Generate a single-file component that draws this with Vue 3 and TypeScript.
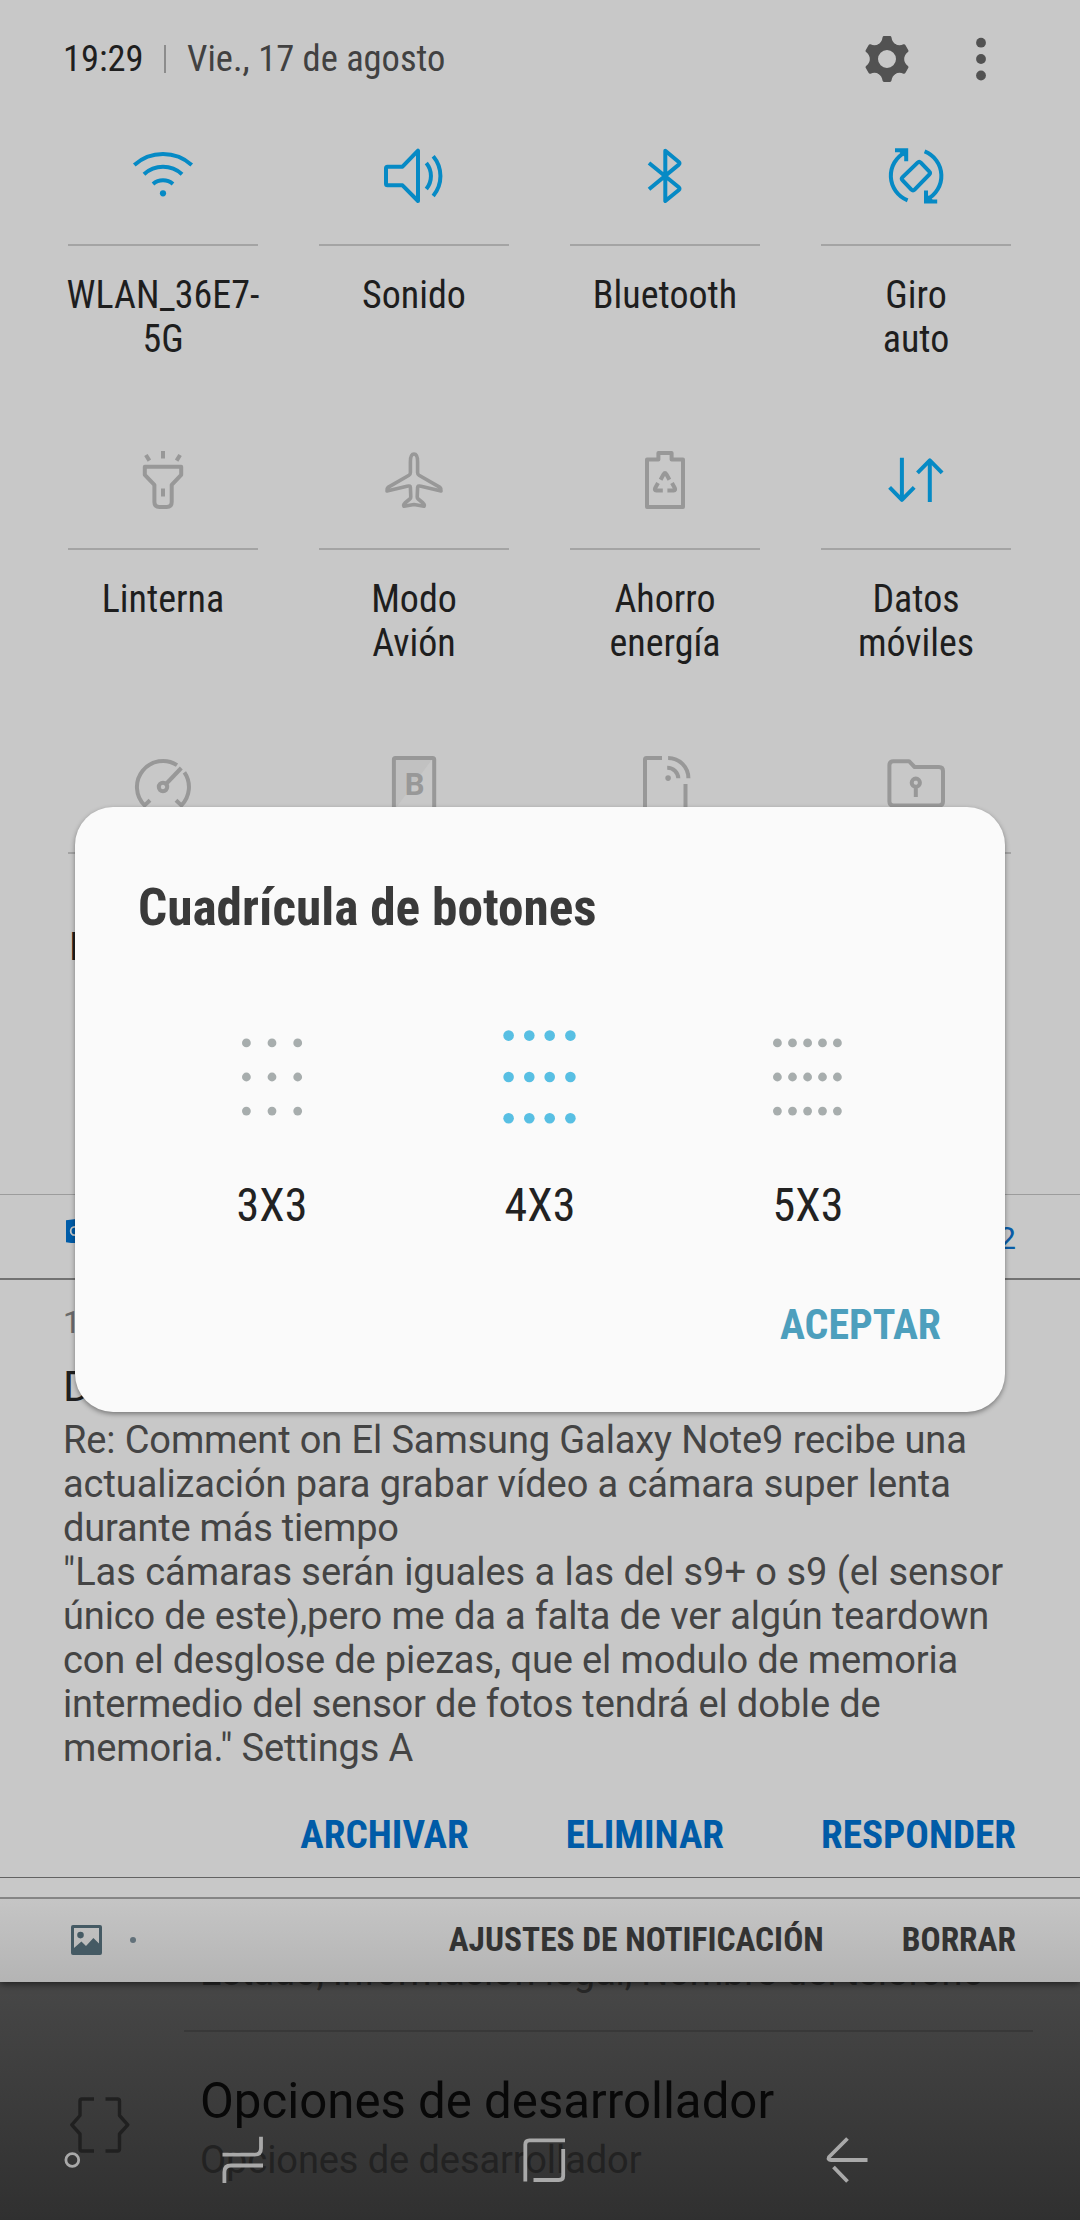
<script setup lang="ts">
interface Icon {
  strokes: string[]
  width?: number
  fills?: string[]
  tint?: string
  letter?: string
}
interface Tile {
  label: string[]
  on: boolean
  icon: Icon
}

const tiles: Tile[] = [
  {
    label: ['WLAN_36E7-', '5G'],
    on: true,
    icon: {
      strokes: [
        'M7.3 24.9A43 43 0 0 1 64.7 24.9',
        'M17 34.2A28 28 0 0 1 55 34.2',
        'M26 44A15.4 15.4 0 0 1 46 44',
      ],
      fills: ['M36 50.2a3.1 3.1 0 1 1 0 6.2a3.1 3.1 0 0 1 0-6.2z'],
    },
  },
  {
    label: ['Sonido'],
    on: true,
    icon: {
      strokes: [
        'M8 28.2Q8 26.7 9.5 26.7H24.5L40 10.7V61L24.5 45.3H9.5Q8 45.3 8 43.8Z',
        'M48.3 23.1A20.5 20.5 0 0 1 48.3 49.1',
        'M55.2 16.2A31 31 0 0 1 55.2 56',
      ],
    },
  },
  {
    label: ['Bluetooth'],
    on: true,
    icon: {
      strokes: ['M20 23L49.8 47.3Q51.2 48.8 49.8 50L36.3 61V10.7L49.8 22Q51.2 23.3 49.8 24.6L20 49.2'],
    },
  },
  {
    label: ['Giro', 'auto'],
    on: true,
    icon: {
      strokes: [
        'M27.6 60.3A26.3 26.3 0 0 1 25.5 12.2',
        'M44.6 11.4A26.3 26.3 0 0 1 46.7 59.5',
        'M37.6 22.6Q39.2 21 40.8 22.6L49.2 31.4Q50.8 33 49.2 34.7L34.6 49.6Q33 51.2 31.4 49.6L22.6 40.4Q21 38.8 22.6 37.2Z',
      ],
      fills: ['M15 8.2H28.2V21.3H24.2V16.6L19.6 12.2H15Z', 'M57.2 63.6H44V50.5H48V55.2L52.6 59.6H57.2Z'],
    },
  },
  {
    label: ['Linterna'],
    on: false,
    icon: {
      strokes: [
        'M17.8 22.7H54.2V30.8L44.7 40.8V58Q44.7 63 39.7 63H32.4Q27.4 63 27.4 58V40.8L17.8 30.8Z',
        'M36 7V14.4M18.9 11L22.4 16.6M53.1 11L49.6 16.6M36 44.4V52.4',
      ],
    },
  },
  {
    label: ['Modo', 'Avión'],
    on: false,
    icon: {
      strokes: [
        'M36 10C33.4 10 32.4 14 32.4 18V28.6Q32.4 30.4 31 31.2L10 43.4Q8.6 44.6 9 47L30 42.1Q32.3 41.5 32.4 43.5L32.8 53Q32.8 54.2 31.8 55L27 59Q25 61 26 62.3L36 60.6L46 62.3Q47 61 45 59L40.2 55Q39.2 54.2 39.2 53L39.6 43.5Q39.7 41.5 42 42.1L63 47Q63.4 44.6 62 43.4L41 31.2Q39.6 30.4 39.6 28.6V18C39.6 14 38.6 10 36 10Z',
      ],
      width: 3.6,
    },
  },
  {
    label: ['Ahorro', 'energía'],
    on: false,
    icon: {
      strokes: [
        'M18 15.5H29.4V9H42.6V15.5H54V63H18Z',
        'M31.6 35.8L34.6 30.2Q36 28 37.4 30.2L40.4 35.8M29 39L26.2 44Q25.2 46.4 27.4 46.6H33.8M43 39L45.8 44Q46.8 46.4 44.6 46.6H38.4',
      ],
    },
  },
  {
    label: ['Datos', 'móviles'],
    on: true,
    icon: {
      strokes: [
        'M21.9 13.7V55.5M9.6 43.4L21.9 55.8L34.2 43.4',
        'M49.8 58V16.2M37.5 28.8L49.8 16.4L62.1 28.8',
      ],
    },
  },
  {
    label: ['\u00a0', 'Rendimiento'],
    on: false,
    icon: {
      strokes: [
        'M50 17.1A26 26 0 0 0 17.6 57.4L23 52.3M49 52.3L54.4 57.4A26 26 0 0 0 57.4 24.4',
        'M39 36L54.3 20',
        'M36 34.8a4.2 4.2 0 1 1 0 8.4a4.2 4.2 0 0 1 0-8.4z',
      ],
    },
  },
  {
    label: [],
    on: false,
    icon: { strokes: ['M15.9 64V11.5Q15.9 10 17.4 10H54.6Q56.2 10 56.2 11.5V64Z'], tint: 'M17.9 60V12H53.6Z', letter: 'B' },
  },
  {
    label: [],
    on: false,
    icon: {
      strokes: [
        'M33 10H17.4Q16 10 16 11.5V64H56.5V36',
        'M39.1 10A20.3 20.3 0 0 1 59.4 30.3M38.2 19.7A11 11 0 0 1 49.3 30.3',
      ],
      fills: ['M39.1 27.3a2.8 2.8 0 1 1 0 5.6a2.8 2.8 0 0 1 0-5.6z'],
    },
  },
  {
    label: [],
    on: false,
    icon: {
      strokes: [
        'M9.4 17.2Q9.4 13.2 13.4 13.2H29L34.6 19H59Q63 19 63 23V53.5Q63 57.5 59 57.5H13.4Q9.4 57.5 9.4 53.5Z',
        'M35.8 30.6a4.1 4.1 0 1 1 0 8.2a4.1 4.1 0 0 1 0-8.2zM35.8 39V49',
      ],
    },
  },
]

interface BodyLine {
  text: string
  tracking: number
}
const body: BodyLine[] = [
  { text: 'Re: Comment on El Samsung Galaxy Note9 recibe una', tracking: -0.12 },
  { text: 'actualización para grabar vídeo a cámara super lenta', tracking: -0.075 },
  { text: 'durante más tiempo', tracking: -0.2 },
  { text: '"Las cámaras serán iguales a las del s9+ o s9 (el sensor', tracking: -0.03 },
  { text: 'único de este),pero me da a falta de ver algún teardown', tracking: -0.145 },
  { text: 'con el desglose de piezas, que el modulo de memoria', tracking: -0.137 },
  { text: 'intermedio del sensor de fotos tendrá el doble de', tracking: -0.155 },
  { text: 'memoria." Settings A', tracking: -0.12 },
]

interface GridOption {
  label: string
  xs: number[]
  ys: number[]
  r: number
  active: boolean
}
const options: GridOption[] = [
  { label: '3X3', xs: [24.4, 50, 75.7], ys: [15.9, 50, 84.1], r: 4.4, active: false },
  { label: '4X3', xs: [18.6, 39.3, 59.7, 80.4], ys: [8.6, 50, 91.3], r: 5.3, active: true },
  { label: '5X3', xs: [19.4, 34.5, 49.6, 64.5, 79.4], ys: [15.9, 50, 84.1], r: 4.4, active: false },
]
</script>

<template>
  <div class="screen">
    <div class="panel">
      <header class="top">
        <span class="time cond">19:29</span>
        <i class="bar"></i>
        <span class="date cond">Vie., 17 de agosto</span>
        <svg class="gear" viewBox="-24 -24 48 48">
          <circle r="12.9" fill="none" stroke="#525252" stroke-width="7.8" />
          <path
            v-for="n in 6"
            :key="n"
            :transform="`rotate(${n * 60})`"
            d="M-3 -22.9H3Q4.2 -22.9 4.5 -21.6Q5 -17 9 -14.5L7 -12H-7L-9 -14.5Q-5 -17 -4.5 -21.6Q-4.2 -22.9 -3 -22.9Z"
            fill="#525252"
          />
        </svg>
        <svg class="kebab" viewBox="0 0 12 48">
          <circle v-for="y in [7.7, 24, 40.5]" :key="y" cx="6" :cy="y" r="4.9" fill="#525252" />
        </svg>
      </header>

      <section class="tiles">
        <div v-for="(t, i) in tiles" :key="i" class="tile">
          <svg class="icon" :class="{ on: t.on }" viewBox="0 0 72 72">
            <path v-if="t.icon.tint" :d="t.icon.tint" fill="#c1c1c1" />
            <path
              v-for="d in t.icon.strokes"
              :key="d"
              :d="d"
              fill="none"
              stroke="currentColor"
              stroke-linejoin="round"
              :stroke-width="t.icon.width ?? 4"
            />
            <path v-for="d in t.icon.fills ?? []" :key="d" :d="d" fill="currentColor" />
            <text v-if="t.icon.letter" x="36.6" y="47" text-anchor="middle" class="glyph">{{ t.icon.letter }}</text>
          </svg>
          <div class="rule"></div>
          <div class="label">
            <span v-for="l in t.label" :key="l" class="cond">{{ l }}</span>
          </div>
        </div>
      </section>

      <div class="app-row">
        <svg class="outlook" viewBox="0 0 32 24">
          <path d="M0 1.2L18 -1V26L0 23.2Z" fill="#005ca8" />
          <ellipse cx="8.4" cy="12" rx="3.7" ry="4.2" fill="none" stroke="#c8c8c8" stroke-width="1.8" />
        </svg>
        <span class="count">2</span>
      </div>

      <article class="mail">
        <div class="when">19:25</div>
        <div class="from">Disqus</div>
        <p class="text">
          <span v-for="l in body" :key="l.text" :style="{ letterSpacing: `${l.tracking}px` }">{{ l.text }}</span>
        </p>
        <div class="actions">
          <b class="cond">ARCHIVAR</b>
          <b class="cond">ELIMINAR</b>
          <b class="cond">RESPONDER</b>
        </div>
      </article>

      <div class="spacer"></div>
      <footer class="foot">
        <svg class="pic" viewBox="0 0 31 30">
          <path
            fill-rule="evenodd"
            fill="#455a64"
            d="M2 0H29Q31 0 31 2V28Q31 30 29 30H2Q0 30 0 28V2Q0 0 2 0ZM3 3V23L10.4 16.6L15 21L22.4 13L28 18.4V3ZM9.5 6.8a3.3 3.3 0 1 0 0 6.6a3.3 3.3 0 0 0 0-6.6z"
          />
        </svg>
        <i class="dot"></i>
        <b class="cond ajustes">AJUSTES DE NOTIFICACIÓN</b>
        <b class="cond borrar">BORRAR</b>
      </footer>
    </div>

    <div class="settings">
      <div class="status">Estado, información legal, Nombre del teléfono</div>
      <div class="dev">
        <svg class="braces" viewBox="0 0 60 56" fill="none" stroke="#202020" stroke-width="3.4" stroke-linejoin="round">
          <path d="M24 2H12Q10 2 10 4V18.5L1.8 27.8L10 37V52Q10 54 12 54H24" />
          <path d="M35.5 2H47.5Q49.5 2 49.5 4V18.5L57.8 27.8L49.5 37V52Q49.5 54 47.5 54H35.5" />
        </svg>
        <div class="dev-text">
          <div class="dev-title">Opciones de desarrollador</div>
          <div class="dev-sub">Opciones de desarrollador</div>
        </div>
      </div>
    </div>

    <nav class="nav">
      <svg viewBox="0 0 1080 60" fill="none" stroke="#a9a9a9" stroke-width="3.8">
        <circle cx="72.3" cy="30" r="6.4" stroke-width="2.8" />
        <path d="M222.5 24.7H254.5Q261 24.7 261 18.2V6.8M263 35.5H230.9Q224.4 35.5 224.4 42V53" />
        <path d="M525.3 51.5V14.5Q525.3 10.4 529.5 10.4H565M563.2 19V46Q563.2 50 559 50H533.5" />
        <path d="M847.5 8.5L829 27Q827.6 30 831 30H867.5M833.5 37L847.5 51.5" stroke-linejoin="round" />
      </svg>
    </nav>

    <div class="dialog">
      <h1 class="cond">Cuadrícula de botones</h1>
      <div class="options">
        <div v-for="o in options" :key="o.label" class="option">
          <svg class="dots" :class="{ active: o.active }" viewBox="0 0 100 100">
            <template v-for="y in o.ys" :key="y">
              <circle v-for="x in o.xs" :key="x" :cx="x" :cy="y" :r="o.r" fill="currentColor" />
            </template>
          </svg>
          <span class="cond">{{ o.label }}</span>
        </div>
      </div>
      <b class="cond accept">ACEPTAR</b>
    </div>
  </div>
</template>

<style>
html,
body {
  margin: 0;
  background: #3a3a3a;
}
</style>

<style scoped>
.screen {
  position: relative;
  width: 1080px;
  height: 2220px;
  overflow: hidden;
  font-family: Roboto, 'Liberation Sans', sans-serif;
  background: #3a3a3a;
}
.cond {
  font-family: 'Roboto Condensed', Roboto, 'Liberation Sans', sans-serif;
  font-stretch: 75%;
  white-space: nowrap;
}
.panel {
  position: relative;
  z-index: 1;
  box-sizing: border-box;
  height: 1982px;
  background: #c8c8c8;
  box-shadow: 0 2px 7px rgba(0, 0, 0, 0.55);
}
.top {
  display: flex;
  align-items: center;
  box-sizing: border-box;
  height: 140px;
  padding: 0 0 23px 63px;
  font-size: 36.5px;
  line-height: 44px;
}
.time {
  width: 101px;
  color: #1f1f1f;
}
.bar {
  width: 2px;
  height: 28px;
  margin-right: 21px;
  background: #8c8c8c;
}
.date {
  width: 676px;
  color: #414141;
}
.gear {
  width: 48px;
  height: 48px;
}
.kebab {
  width: 12px;
  height: 48px;
  margin-left: 64px;
}
.tiles {
  display: grid;
  grid-template-columns: repeat(4, 190px);
  column-gap: 61px;
  grid-auto-rows: 304px;
  height: 1054px;
  padding-left: 68px;
}
.tile {
  display: flex;
  flex-direction: column;
  align-items: center;
}
.icon {
  width: 72px;
  height: 72px;
  color: #989898;
}
.icon.on {
  color: #068ac5;
}
.glyph {
  font: 700 31px Roboto, sans-serif;
  fill: #989898;
}
.rule {
  width: 190px;
  height: 2px;
  margin: 32px 0 27px;
  background: #a4a4a4;
}
.label {
  display: flex;
  flex-direction: column;
  align-items: center;
  width: 190px;
  font-size: 38px;
  line-height: 44px;
  color: #1e1e1e;
}
.app-row {
  display: flex;
  justify-content: space-between;
  box-sizing: border-box;
  height: 86px;
  padding: 24px 64px 0 66px;
  border-top: 1px solid #9c9c9c;
  border-bottom: 2px solid #727272;
  color: #0a5ca6;
}
.outlook {
  width: 32px;
  height: 24px;
}
.count {
  font-size: 32px;
  line-height: 38px;
}
.mail {
  box-sizing: border-box;
  height: 598px;
  padding: 25px 64px 0 63px;
  border-bottom: 1px solid #636363;
}
.when {
  font-size: 31px;
  line-height: 36px;
  color: #6b6b6b;
}
.from {
  margin-top: 20px;
  font-size: 43px;
  line-height: 50px;
  color: #1f1f1f;
}
.text {
  display: flex;
  flex-direction: column;
  margin: 7px 0 0;
  font-size: 38px;
  line-height: 44px;
  color: #444;
  white-space: nowrap;
}
.actions {
  display: flex;
  justify-content: flex-end;
  gap: 97px;
  margin-top: 42px;
  font-size: 39.2px;
  line-height: 46px;
  color: #005ba7;
}
.spacer {
  height: 19px;
}
.foot {
  display: flex;
  align-items: center;
  box-sizing: border-box;
  height: 85px;
  padding: 0 64px 2px 71px;
  border-top: 2px solid #858585;
  background: linear-gradient(#c5c5c5, #b4b4b4);
  font-size: 33.4px;
  line-height: 40px;
  color: #333;
}
.pic {
  width: 31px;
  height: 30px;
}
.dot {
  width: 6px;
  height: 6px;
  margin-left: 28px;
  border-radius: 50%;
  background: #62717a;
}
.ajustes {
  margin-left: auto;
}
.borrar {
  margin-left: 78px;
}
.settings {
  box-sizing: border-box;
  height: 270px;
  margin-top: -32px;
  background: linear-gradient(#474747 32px, #303030);
}
.status {
  height: 80px;
  margin: 0 47px 0 184px;
  padding-left: 16px;
  border-bottom: 2px solid #383838;
  font-size: 38px;
  line-height: 44px;
  letter-spacing: -0.14px;
  color: #282828;
  white-space: nowrap;
}
.dev {
  display: flex;
  padding-left: 70px;
}
.braces {
  width: 60px;
  height: 56px;
  margin-top: 65px;
}
.dev-text {
  margin: 40px 0 0 70px;
  white-space: nowrap;
}
.dev-title {
  font-size: 49.2px;
  line-height: 58px;
  color: #080808;
}
.dev-sub {
  margin-top: 8px;
  font-size: 38px;
  line-height: 44px;
  letter-spacing: -0.08px;
  color: #222;
}
.nav {
  position: absolute;
  left: 0;
  top: 2130px;
  width: 1080px;
  height: 60px;
}
.nav svg {
  display: block;
  width: 1080px;
  height: 60px;
}
.dialog {
  position: absolute;
  z-index: 2;
  left: 75px;
  top: 807px;
  box-sizing: border-box;
  width: 930px;
  height: 605px;
  padding: 71px 64px 0 63px;
  border-radius: 38px;
  background: #fafafa;
  box-shadow: 0 2px 5px rgba(0, 0, 0, 0.4);
}
.dialog h1 {
  margin: 0;
  font-size: 51.3px;
  line-height: 60px;
  color: #3a3a3a;
}
.options {
  display: flex;
  justify-content: space-between;
  margin: 88.5px 80px 0 81px;
}
.option {
  display: flex;
  flex-direction: column;
  align-items: center;
  width: 106px;
  font-size: 46px;
  line-height: 54px;
  color: #222;
}
.dots {
  width: 100px;
  height: 100px;
  margin-bottom: 51px;
  color: #a7adad;
}
.dots.active {
  color: #58bfe3;
}
.accept {
  display: block;
  margin-top: 68px;
  font-size: 41.8px;
  line-height: 50px;
  text-align: right;
  color: #4d9fbd;
}
</style>
